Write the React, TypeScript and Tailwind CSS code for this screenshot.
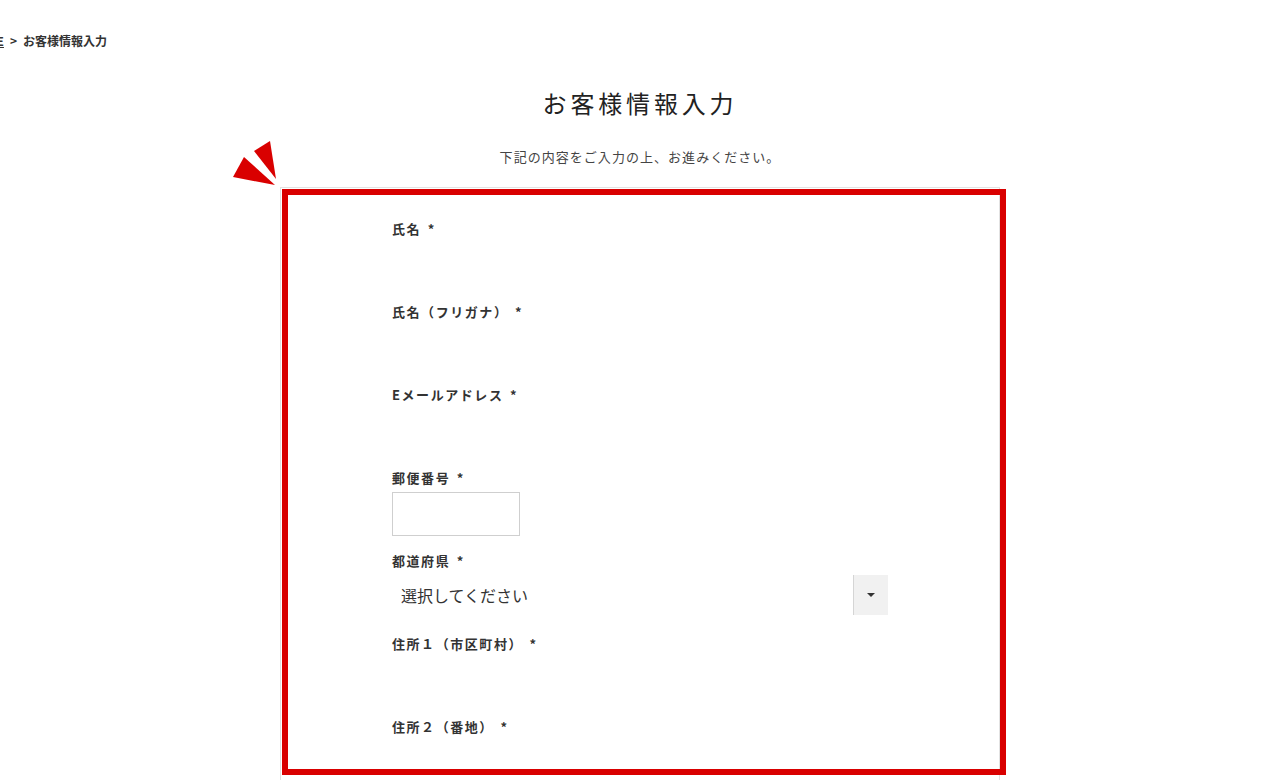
import React from "react";

const fields = [
  { label: "氏名", kind: "text" },
  { label: "氏名（フリガナ）", kind: "text" },
  { label: "Eメールアドレス", kind: "text" },
  { label: "郵便番号", kind: "zip" },
  { label: "都道府県", kind: "select" },
  { label: "住所１（市区町村）", kind: "text" },
  { label: "住所２（番地）", kind: "text" },
  { label: "電話番号", kind: "text" },
];

const App = () => {
  return (
    <div
      className="min-h-screen bg-white text-[#333] overflow-hidden"
      style={{ fontFamily: '"Noto Sans CJK JP", "Noto Sans", sans-serif' }}
    >
      {/* Breadcrumb */}
      <div className="pt-[31px] h-[20px] box-content text-[12px] font-bold text-[#333] whitespace-nowrap leading-[20px]">
        <span className="-ml-[32px] underline">HOME</span>
        <span className="mx-[6px]">&gt;</span>
        <span>お客様情報入力</span>
      </div>

      {/* Heading */}
      <h1 className="mt-[37px] text-center text-[24px] leading-[30px] tracking-[0.16em] text-[#222] font-normal">
        お客様情報入力
      </h1>
      <p className="mt-[29px] text-center text-[13px] leading-[20px] tracking-[0.08em] text-[#444]">
        下記の内容をご入力の上、お進みください。
      </p>

      {/* Form */}
      <div className="relative mx-auto mt-[20px] w-[720px] border border-[#e2e2e2] px-[111px] pt-[31px] pb-[40px]">
        {fields.map((f) => (
          <div key={f.label} className={f.kind === "select" ? "mb-[19px]" : "mb-[15px]"}>
            <label className="block h-[20px] text-[13px] leading-[20px] font-bold tracking-[0.12em] text-[#333]">
              {f.label} <span className="ml-[2px]">*</span>
            </label>
            {f.kind === "text" && (
              <input className="mt-[4px] block h-[44px] w-full border border-transparent bg-white outline-none" />
            )}
            {f.kind === "zip" && (
              <input className="mt-[4px] block h-[44px] w-[128px] border border-[#cfcfcf] bg-white outline-none" />
            )}
            {f.kind === "select" && (
              <div className="mt-[4px] flex h-[40px] w-full items-center justify-between bg-white">
                <span className="pl-[9px] text-[16px] text-[#333]">選択してください</span>
                <span className="flex h-full w-[35px] items-center justify-center border-l border-[#d5d5d5] bg-[#f1f1f1]">
                  <span className="block h-0 w-0 border-x-[4px] border-t-[4px] border-x-transparent border-t-[#333]" />
                </span>
              </div>
            )}
          </div>
        ))}

        {/* Annotation box */}
        <div className="pointer-events-none absolute left-[1px] top-[1px] h-[586px] w-[724px] border-[6px] border-[#d90000]" />

        {/* Annotation arrow marks */}
        <svg
          className="pointer-events-none absolute -left-[50px] -top-[48px]"
          width="50"
          height="50"
          viewBox="0 0 50 50"
        >
          <polygon points="2,37 13,17 44,45" fill="#d90000" />
          <polygon points="23,11 39,1 45,39" fill="#d90000" />
        </svg>
      </div>
    </div>
  );
};

export default App;
